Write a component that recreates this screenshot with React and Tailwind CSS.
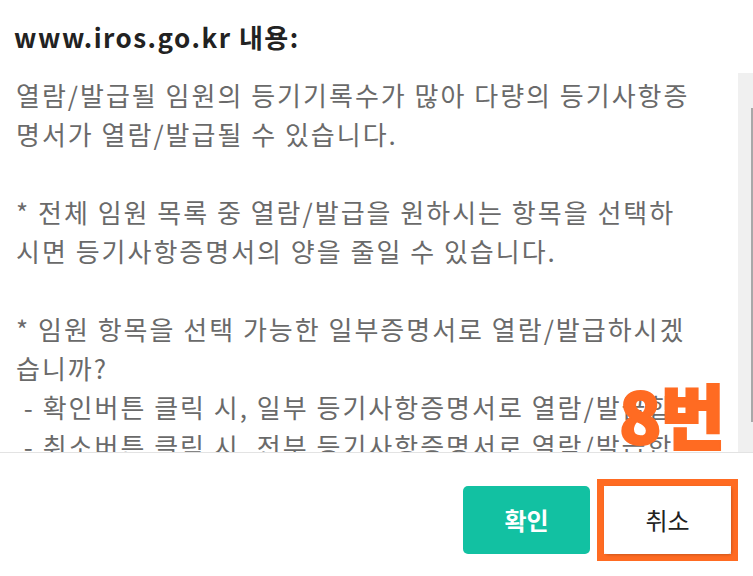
const lines = [
  '열람/발급될 임원의 등기기록수가 많아 다량의 등기사항증',
  '명서가 열람/발급될 수 있습니다.',
  '',
  '* 전체 임원 목록 중 열람/발급을 원하시는 항목을 선택하',
  '시면 등기사항증명서의 양을 줄일 수 있습니다.',
  '',
  '* 임원 항목을 선택 가능한 일부증명서로 열람/발급하시겠',
  '습니까?',
  '\u00a0- 확인버튼 클릭 시, 일부 등기사항증명서로 열람/발급합',
  '\u00a0- 취소버튼 클릭 시, 전부 등기사항증명서로 열람/발급합',
];

export default function App() {
  const font = { fontFamily: '"Noto Sans CJK KR", "Noto Sans", sans-serif' };

  return (
    <div className="relative w-[753px] h-[576px] bg-white overflow-hidden" style={font}>
      <div className="h-[73px] pl-[14px] pt-[19px] text-[26px] font-bold leading-[36px] tracking-[1.5px] text-[#222]">
        www.iros.go.kr 내용:
      </div>

      <div className="flex h-[380px] border-b border-[#e3e3e3]">
        <div className="flex-1 overflow-hidden pl-[16px] pt-[2px] text-[26px] leading-[39px] tracking-[2px] text-[#6a6a6a]">
          {lines.map((line, i) => (
            <div key={i} className="whitespace-nowrap h-[39px]">
              {line}
            </div>
          ))}
        </div>
        <div className="w-[15px] bg-[#f0f0f0] pt-[35px] pb-[30px] flex justify-end">
          <div className="w-[2px] h-full bg-[#a8a8a8]" />
        </div>
      </div>

      <div className="flex justify-end gap-[14px] pt-[33px] pr-[22px]">
        <button className="w-[127px] h-[68px] rounded-[5px] bg-[#12c1a2] text-white text-[24px] font-bold">
          확인
        </button>
        <div className="border-[7px] border-[#ff6b22] -m-[7px]">
          <button className="w-[127px] h-[68px] rounded-[4px] bg-white text-[#222] text-[24px] shadow-[1px_1px_3px_rgba(0,0,0,0.2)]">
            취소
          </button>
        </div>
      </div>

      <div className="absolute left-[619px] top-[372px] text-[70px] font-black leading-[84px] tracking-[-1px] text-[#ff6b22] [-webkit-text-stroke:2px_#ff6b22]">
        8번
      </div>
    </div>
  );
}
